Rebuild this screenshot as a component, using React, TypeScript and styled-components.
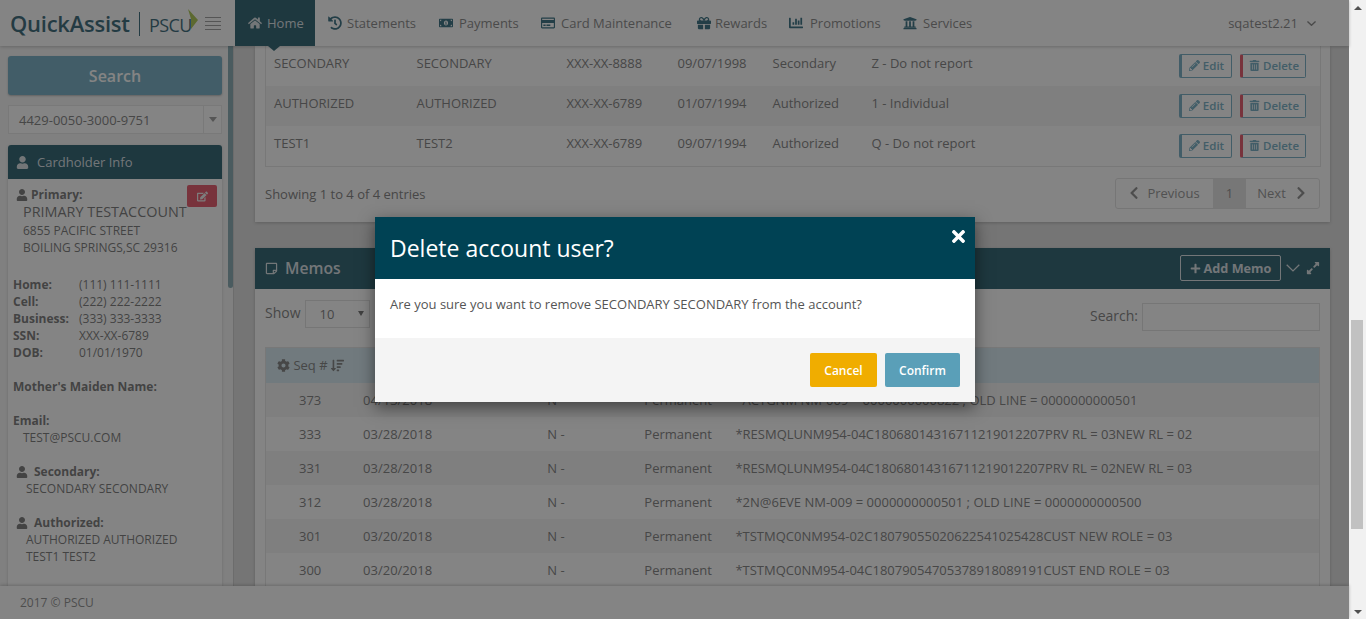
import styled, { createGlobalStyle } from "styled-components";
import {
  FaCalendarAlt,
  FaChartBar,
  FaChevronLeft,
  FaChevronRight,
  FaCog,
  FaEdit,
  FaExpandAlt,
  FaGift,
  FaHistory,
  FaHome,
  FaMoneyBillAlt,
  FaPencilAlt,
  FaPlus,
  FaRegCreditCard,
  FaRegStickyNote,
  FaSortAmountDown,
  FaTimes,
  FaTrashAlt,
  FaUniversity,
  FaUser,
} from "react-icons/fa";

const GlobalStyle = createGlobalStyle`
  html, body {
    margin: 0;
    padding: 0;
    height: 100%;
    overflow: hidden;
  }
  body {
    font-family: "Open Sans", "Liberation Sans", sans-serif;
    font-size: 13px;
    color: #666;
  }
  * {
    box-sizing: border-box;
  }
`;

const Shell = styled.div`
  display: flex;
  width: 1366px;
  height: 619px;
  overflow: hidden;
`;

const Page = styled.div`
  position: relative;
  flex: 1;
  min-width: 0;
  display: flex;
  flex-direction: column;
  background: #d9d9d9;
`;

const WindowScrollbar = styled.div`
  width: 17px;
  background: #f1f1f1;
  display: flex;
  flex-direction: column;
  align-items: center;
  justify-content: space-between;
  padding: 6px 0 5px;
  position: relative;
`;

const ScrollArrow = styled.span<{ $up?: boolean }>`
  width: 0;
  height: 0;
  border-left: 4px solid transparent;
  border-right: 4px solid transparent;
  ${(p) => (p.$up ? "border-bottom: 4px solid #505050;" : "border-top: 4px solid #505050;")}
`;

const ScrollThumb = styled.span`
  position: absolute;
  left: 2px;
  top: 320px;
  width: 12px;
  height: 209px;
  background: #c1c1c1;
`;

const Header = styled.header`
  position: relative;
  z-index: 2;
  height: 46px;
  flex: none;
  display: flex;
  background: #fff;
  box-shadow: 0 1px 3px rgba(0, 0, 0, 0.25);
`;

const Brand = styled.div`
  width: 235px;
  flex: none;
  display: flex;
  align-items: center;
  padding-left: 10px;
  color: #0d4a5c;
`;

const BrandName = styled.span`
  width: 120px;
  font-size: 22px;
  font-weight: 600;
  letter-spacing: -0.25px;
  white-space: nowrap;
`;

const BrandRule = styled.span`
  width: 1px;
  height: 24px;
  background: #0d4a5c;
  margin: 2px 9px 0 9px;
`;

const BrandPscu = styled.span`
  font-size: 18px;
  letter-spacing: -0.6px;
  margin-top: 3px;
`;

const BrandMark = styled.svg`
  width: 10px;
  height: 21px;
  margin: -7px 0 0 -4px;
`;

const Burger = styled.span`
  width: 16px;
  height: 13px;
  margin: 1px 0 0 7px;
  border-top: 1px solid #8a8a8a;
  border-bottom: 1px solid #8a8a8a;
  position: relative;
  &::before,
  &::after {
    content: "";
    position: absolute;
    left: 0;
    right: 0;
    height: 1px;
    background: #8a8a8a;
  }
  &::before {
    top: 3px;
  }
  &::after {
    top: 7px;
  }
`;

const Nav = styled.nav`
  display: flex;
  flex: 1;
`;

const NavItem = styled.a<{ $active?: boolean; $width: number; $gap: number }>`
  position: relative;
  width: ${(p) => p.$width}px;
  flex: none;
  display: flex;
  align-items: center;
  gap: ${(p) => p.$gap}px;
  padding-left: 13px;
  font-size: 13px;
  color: ${(p) => (p.$active ? "#d5dde0" : "#6f6f6f")};
  background: ${(p) => (p.$active ? "#004254" : "transparent")};
  svg {
    flex: none;
    font-size: 14px;
    color: ${(p) => (p.$active ? "#d5dde0" : "#0d5268")};
  }
  ${(p) =>
    p.$active &&
    `&::after {
      content: "";
      position: absolute;
      left: 33px;
      bottom: -5px;
      border-left: 6px solid transparent;
      border-right: 6px solid transparent;
      border-top: 5px solid #004254;
    }`}
`;

const UserMenu = styled.div`
  display: flex;
  align-items: center;
  gap: 9px;
  padding-right: 33px;
  font-size: 13px;
  color: #6f6f6f;
`;

const ThinChevron = styled.svg<{ $size: number }>`
  width: ${(p) => p.$size}px;
  height: ${(p) => Math.round(p.$size * 0.6)}px;
  fill: none;
  stroke: currentColor;
  stroke-width: 1.3;
  flex: none;
`;

const Body = styled.div`
  flex: 1;
  min-height: 0;
  display: flex;
  overflow: hidden;
`;

const Sidebar = styled.aside`
  width: 234px;
  flex: none;
  position: relative;
  background: #f4f4f4;
  border-right: 1px solid #c4c4c4;
  padding: 10px 7px 0 8px;
`;

const SidebarThumb = styled.span`
  position: absolute;
  right: 0;
  top: 0;
  width: 5px;
  height: 242px;
  border-radius: 0 0 3px 3px;
  background: #6f9aa3;
`;

const SearchButton = styled.button`
  display: block;
  width: 214px;
  height: 39px;
  border: 0;
  border-radius: 3px;
  background: #5a9fb8;
  box-shadow: 0 1px 2px rgba(0, 0, 0, 0.3);
  color: #fff;
  font: 600 16px "Open Sans", sans-serif;
`;

const AccountSelect = styled.div`
  width: 214px;
  height: 29px;
  margin-top: 10px;
  display: flex;
  align-items: center;
  background: #fff;
  border: 1px solid #e3e3e3;
  padding-left: 10px;
  font-size: 13px;
`;

const AccountNumber = styled.span`
  flex: 1;
`;

const SelectCaret = styled.span`
  width: 18px;
  height: 100%;
  border-left: 1px solid #e3e3e3;
  display: flex;
  align-items: center;
  justify-content: center;
  &::after {
    content: "";
    border-left: 4px solid transparent;
    border-right: 4px solid transparent;
    border-top: 5px solid #8a8a8a;
  }
`;

const Card = styled.section`
  width: 214px;
  margin-top: 11px;
  background: #fff;
  box-shadow: 0 1px 3px rgba(0, 0, 0, 0.2);
  border-radius: 3px 3px 0 0;
  height: 470px;
`;

const CardHeader = styled.div`
  height: 34px;
  display: flex;
  align-items: center;
  gap: 8px;
  padding-left: 8px;
  background: #004254;
  border-radius: 3px 3px 0 0;
  color: #d5dde0;
  font-size: 13px;
  svg {
    font-size: 13px;
  }
`;

const CardBody = styled.div`
  position: relative;
  padding: 7px 5px;
  font-size: 12px;
  line-height: 17px;
  color: #5d5d5d;
`;

const EditHolder = styled.button`
  position: absolute;
  top: 6px;
  right: 5px;
  width: 30px;
  height: 22px;
  border: 0;
  border-radius: 2px;
  background: #e2354b;
  color: #eee;
  display: flex;
  align-items: center;
  justify-content: center;
  font-size: 11px;
`;

const Role = styled.div<{ $top?: number; $gap: number }>`
  display: flex;
  align-items: center;
  gap: ${(p) => p.$gap}px;
  padding-left: 3px;
  font-weight: 700;
  margin-top: ${(p) => p.$top ?? 0}px;
  svg {
    font-size: 12px;
  }
`;

const HolderName = styled.div`
  padding: 0 0 2px 10px;
  font-size: 14.4px;
  line-height: 17px;
  white-space: nowrap;
`;

const Indented = styled.div<{ $left?: number }>`
  padding-left: ${(p) => p.$left ?? 10}px;
`;

const Contact = styled.div`
  display: grid;
  grid-template-columns: 66px 1fr;
  margin-top: 20px;
`;

const Label = styled.div<{ $top?: number }>`
  font-weight: 700;
  margin-top: ${(p) => p.$top ?? 0}px;
`;

const Main = styled.main`
  flex: 1;
  min-width: 0;
  padding: 0 19px 0 21px;
  display: flex;
  flex-direction: column;
  gap: 26px;
  overflow: hidden;
`;

const Panel = styled.section`
  flex: none;
  background: #fff;
  box-shadow: 0 1px 3px rgba(0, 0, 0, 0.25);
`;

const UsersBody = styled.div`
  padding: 0 10px 13px;
`;

const Table = styled.table`
  width: 100%;
  border-collapse: collapse;
  table-layout: fixed;
  font-size: 13px;
`;

const UsersTable = styled(Table)`
  border: 1px solid #e2e2e2;
  border-top: 0;
`;

const MemoTable = styled(Table)`
  outline: 1px solid #e2e2e2;
  outline-offset: -1px;
`;

const UserRow = styled.tr<{ $shaded: boolean }>`
  background: ${(p) => (p.$shaded ? "#f3f3f3" : "#fff")};
  height: 40px;
`;

const Cell = styled.td`
  padding: 0 0 6px 8px;
  vertical-align: middle;
  white-space: nowrap;
`;

const ActionCell = styled(Cell)`
  padding: 0 14px 0 0;
`;

const Actions = styled.div`
  display: flex;
  justify-content: flex-end;
  gap: 8px;
`;

const OutlineButton = styled.button<{ $accent: string; $width: number }>`
  width: ${(p) => p.$width}px;
  height: 24px;
  padding: 0 0 1px;
  display: flex;
  align-items: center;
  justify-content: center;
  gap: 3px;
  background: #fff;
  border: 1px solid #5a9fb8;
  border-left: 3px solid ${(p) => p.$accent};
  border-radius: 2px;
  color: #5a9fb8;
  font: 600 11.5px "Open Sans", sans-serif;
  svg {
    font-size: 11px;
  }
`;

const TableFooter = styled.div`
  display: flex;
  align-items: center;
  justify-content: space-between;
  margin-top: 11px;
`;

const EntriesInfo = styled.span`
  padding-top: 2px;
`;

const Pagination = styled.div`
  display: flex;
  height: 31px;
  border: 1px solid #dcdcdc;
  border-radius: 3px;
  font-size: 13px;
`;

const PageLink = styled.span<{ $current?: boolean; $width: number; $gap?: number; $trail?: number }>`
  width: ${(p) => p.$width}px;
  display: flex;
  align-items: center;
  justify-content: center;
  gap: ${(p) => p.$gap ?? 8}px;
  padding-right: ${(p) => p.$trail ?? 0}px;
  color: ${(p) => (p.$current ? "#777" : "#808080")};
  background: ${(p) => (p.$current ? "#dedede" : "transparent")};
  svg {
    font-size: 14px;
    color: #777;
  }
`;

const MemoHeader = styled.div`
  height: 41px;
  display: flex;
  align-items: center;
  background: #004254;
  color: #d5dde0;
  padding: 0 10px;
`;

const MemoTitle = styled.div`
  flex: 1;
  display: flex;
  align-items: center;
  gap: 7px;
  font-size: 15.7px;
  font-weight: 600;
  svg {
    font-size: 13px;
  }
`;

const AddMemo = styled.button`
  height: 26px;
  width: 101px;
  display: flex;
  align-items: center;
  justify-content: center;
  gap: 3px;
  background: transparent;
  border: 1px solid #d5dde0;
  border-radius: 2px;
  color: #d5dde0;
  font: 700 12.7px "Open Sans", sans-serif;
  white-space: nowrap;
  padding: 0;
  svg {
    font-size: 11px;
  }
`;

const HeaderTool = styled.span<{ $left: number }>`
  display: flex;
  align-items: center;
  margin-left: ${(p) => p.$left}px;
  color: #d5dde0;
  font-size: 14px;
`;

const MemoBody = styled.div`
  padding: 11px 10px 0;
`;

const MemoControls = styled.div`
  display: flex;
  align-items: flex-start;
  justify-content: space-between;
  height: 31px;
  margin-bottom: 16px;
  font-size: 14px;
`;

const ShowGroup = styled.div`
  display: flex;
  align-items: center;
  gap: 4px;
`;

const ControlLabel = styled.span`
  padding-bottom: 2px;
`;

const PageSize = styled.div`
  width: 65px;
  height: 28px;
  border: 1px solid #dcdcdc;
  display: flex;
  align-items: center;
  justify-content: space-between;
  padding: 0 5px 0 14px;
  font-size: 13px;
  &::after {
    content: "";
    border-left: 3px solid transparent;
    border-right: 3px solid transparent;
    border-top: 5px solid #555;
  }
`;

const SearchGroup = styled.div`
  display: flex;
  align-items: center;
  gap: 4px;
  margin-top: 3px;
`;

const SearchField = styled.div`
  width: 178px;
  height: 28px;
  border: 1px solid #dcdcdc;
`;

const HeadRow = styled.tr`
  height: 36px;
  background: #cfe6ef;
`;

const HeadCell = styled.th`
  padding: 0 0 0 12px;
  text-align: left;
  font-weight: 400;
  color: #666;
  svg {
    font-size: 13px;
    vertical-align: -2px;
  }
`;

const MemoRow = styled.tr<{ $shaded: boolean }>`
  height: 34px;
  background: ${(p) => (p.$shaded ? "#f3f3f3" : "#fff")};
`;

const SeqCell = styled.td`
  padding-left: 34px;
`;

const MemoCell = styled.td`
  padding: 0;
  white-space: nowrap;
`;

const Footer = styled.footer`
  position: relative;
  z-index: 2;
  height: 33px;
  flex: none;
  display: flex;
  align-items: center;
  padding-left: 20px;
  background: #fff;
  box-shadow: 0 -1px 3px rgba(0, 0, 0, 0.25);
  font-size: 12px;
  color: #777;
`;

const Backdrop = styled.div`
  position: absolute;
  inset: 0;
  z-index: 5;
  background: rgba(50, 50, 50, 0.6);
`;

const Modal = styled.div`
  position: absolute;
  z-index: 6;
  left: 375px;
  top: 217px;
  width: 600px;
  height: 185px;
  display: flex;
  flex-direction: column;
  background: #fff;
  box-shadow: 0 5px 15px rgba(0, 0, 0, 0.5);
`;

const ModalHeader = styled.div`
  position: relative;
  height: 62px;
  flex: none;
  display: flex;
  align-items: center;
  padding-left: 15px;
  background: #004254;
  color: #fff;
  font-size: 23px;
`;

const CloseButton = styled.span`
  position: absolute;
  right: 7px;
  top: 10px;
  display: flex;
  color: #fff;
  font-size: 19px;
`;

const ModalBody = styled.div`
  height: 59px;
  flex: none;
  padding: 17px 15px 0;
  font-size: 13px;
  line-height: 17px;
  color: #555;
`;

const ModalFooter = styled.div`
  flex: 1;
  display: flex;
  align-items: center;
  justify-content: flex-end;
  gap: 8px;
  padding-right: 15px;
  background: #f4f4f4;
`;

const ModalButton = styled.button<{ $color: string; $width: number }>`
  width: ${(p) => p.$width}px;
  height: 34px;
  border: 0;
  border-radius: 2px;
  background: ${(p) => p.$color};
  color: #fff;
  font: 600 12px "Open Sans", sans-serif;
`;

const navItems = [
  { label: "Statements", icon: <FaHistory />, width: 111, gap: 5 },
  { label: "Payments", icon: <FaMoneyBillAlt />, width: 102, gap: 6 },
  { label: "Card Maintenance", icon: <FaRegCreditCard />, width: 156, gap: 6 },
  { label: "Rewards", icon: <FaGift />, width: 92, gap: 4 },
  { label: "Promotions", icon: <FaChartBar />, width: 114, gap: 7 },
  { label: "Services", icon: <FaUniversity />, width: 100, gap: 6 },
];

const users = [
  ["SECONDARY", "SECONDARY", "XXX-XX-8888", "09/07/1998", "Secondary", "Z - Do not report"],
  ["AUTHORIZED", "AUTHORIZED", "XXX-XX-6789", "01/07/1994", "Authorized", "1 - Individual"],
  ["TEST1", "TEST2", "XXX-XX-6789", "09/07/1994", "Authorized", "Q - Do not report"],
];

const memos = [
  ["373", "04/13/2018", "N -", "Permanent", "*ACTGNM NM-009 = 0000000000822 ; OLD LINE = 0000000000501"],
  ["333", "03/28/2018", "N -", "Permanent", "*RESMQLUNM954-04C18068014316711219012207PRV RL = 03NEW RL = 02"],
  ["331", "03/28/2018", "N -", "Permanent", "*RESMQLUNM954-04C18068014316711219012207PRV RL = 02NEW RL = 03"],
  ["312", "03/28/2018", "N -", "Permanent", "*2N@6EVE NM-009 = 0000000000501 ; OLD LINE = 0000000000500"],
  ["301", "03/20/2018", "N -", "Permanent", "*TSTMQC0NM954-02C18079055020622541025428CUST NEW ROLE = 03"],
  ["300", "03/20/2018", "N -", "Permanent", "*TSTMQC0NM954-04C18079054705378918089191CUST END ROLE = 03"],
];

const contacts = [
  ["Home:", "(111) 111-1111"],
  ["Cell:", "(222) 222-2222"],
  ["Business:", "(333) 333-3333"],
  ["SSN:", "XXX-XX-6789"],
  ["DOB:", "01/01/1970"],
];

const userWidths = [143, 150, 111, 95, 99, 300, 157];
const memoWidths = [98, 184, 97, 91, 584];

function Chevron({ size }: { size: number }) {
  return (
    <ThinChevron $size={size} viewBox="0 0 10 6" preserveAspectRatio="none">
      <path d="M0.5 0.5L5 5.2L9.5 0.5" vectorEffect="non-scaling-stroke" />
    </ThinChevron>
  );
}

export default function App() {
  return (
    <Shell>
      <GlobalStyle />
      <Page>
        <Header>
          <Brand>
            <BrandName>QuickAssist</BrandName>
            <BrandRule />
            <BrandPscu>PSCU</BrandPscu>
            <BrandMark viewBox="0 0 10 21">
              <path d="M0 0L10 11L3 20L3 10z" fill="#9bbb2f" />
            </BrandMark>
            <Burger />
          </Brand>
          <Nav>
            <NavItem $active $width={80} $gap={5}>
              <FaHome />
              Home
            </NavItem>
            {navItems.map((item) => (
              <NavItem key={item.label} $width={item.width} $gap={item.gap}>
                {item.icon}
                {item.label}
              </NavItem>
            ))}
          </Nav>
          <UserMenu>
            sqatest2.21
            <Chevron size={9} />
          </UserMenu>
        </Header>

        <Body>
          <Sidebar>
            <SidebarThumb />
            <SearchButton>Search</SearchButton>
            <AccountSelect>
              <AccountNumber>4429-0050-3000-9751</AccountNumber>
              <SelectCaret />
            </AccountSelect>
            <Card>
              <CardHeader>
                <FaUser />
                Cardholder Info
              </CardHeader>
              <CardBody>
                <EditHolder>
                  <FaEdit />
                </EditHolder>
                <Role $gap={3}>
                  <FaUser />
                  Primary:
                </Role>
                <HolderName>PRIMARY TESTACCOUNT</HolderName>
                <Indented>6855 PACIFIC STREET</Indented>
                <Indented>BOILING SPRINGS,SC 29316</Indented>
                <Contact>
                  {contacts.map(([label, value]) => (
                    <>
                      <Label key={label}>{label}</Label>
                      <div key={value}>{value}</div>
                    </>
                  ))}
                </Contact>
                <Label $top={17}>Mother's Maiden Name:</Label>
                <Label $top={17}>Email:</Label>
                <Indented>TEST@PSCU.COM</Indented>
                <Role $top={17} $gap={6}>
                  <FaUser />
                  Secondary:
                </Role>
                <Indented $left={13}>SECONDARY SECONDARY</Indented>
                <Role $top={17} $gap={6}>
                  <FaUser />
                  Authorized:
                </Role>
                <Indented $left={13}>AUTHORIZED AUTHORIZED</Indented>
                <Indented $left={13}>TEST1 TEST2</Indented>
              </CardBody>
            </Card>
          </Sidebar>

          <Main>
            <Panel>
              <UsersBody>
                <UsersTable>
                  <colgroup>
                    {userWidths.map((w, i) => (
                      <col key={i} width={w} />
                    ))}
                  </colgroup>
                  <tbody>
                    {users.map((row, i) => (
                      <UserRow key={i} $shaded={i % 2 === 1}>
                        {row.map((value, j) => (
                          <Cell key={j}>{value}</Cell>
                        ))}
                        <ActionCell>
                          <Actions>
                            <OutlineButton $accent="#5a9fb8" $width={53}>
                              <FaPencilAlt />
                              Edit
                            </OutlineButton>
                            <OutlineButton $accent="#e2354b" $width={66}>
                              <FaTrashAlt />
                              Delete
                            </OutlineButton>
                          </Actions>
                        </ActionCell>
                      </UserRow>
                    ))}
                  </tbody>
                </UsersTable>
                <TableFooter>
                  <EntriesInfo>Showing 1 to 4 of 4 entries</EntriesInfo>
                  <Pagination>
                    <PageLink $width={97} $gap={6} $trail={2}>
                      <FaChevronLeft />
                      Previous
                    </PageLink>
                    <PageLink $current $width={33}>
                      1
                    </PageLink>
                    <PageLink $width={73}>
                      Next
                      <FaChevronRight />
                    </PageLink>
                  </Pagination>
                </TableFooter>
              </UsersBody>
            </Panel>

            <Panel>
              <MemoHeader>
                <MemoTitle>
                  <FaRegStickyNote />
                  Memos
                </MemoTitle>
                <AddMemo>
                  <FaPlus />
                  Add Memo
                </AddMemo>
                <HeaderTool $left={5}>
                  <Chevron size={14} />
                </HeaderTool>
                <HeaderTool $left={6}>
                  <FaExpandAlt />
                </HeaderTool>
              </MemoHeader>
              <MemoBody>
                <MemoControls>
                  <ShowGroup>
                    <ControlLabel>Show</ControlLabel>
                    <PageSize>10</PageSize>
                  </ShowGroup>
                  <SearchGroup>
                    <ControlLabel>Search:</ControlLabel>
                    <SearchField />
                  </SearchGroup>
                </MemoControls>
                <MemoTable>
                  <colgroup>
                    {memoWidths.map((w, i) => (
                      <col key={i} width={w} />
                    ))}
                  </colgroup>
                  <thead>
                    <HeadRow>
                      <HeadCell>
                        <FaCog /> Seq # <FaSortAmountDown />
                      </HeadCell>
                      <HeadCell>
                        <FaCalendarAlt />
                      </HeadCell>
                      <HeadCell />
                      <HeadCell />
                      <HeadCell />
                    </HeadRow>
                  </thead>
                  <tbody>
                    {memos.map((row, i) => (
                      <MemoRow key={row[0]} $shaded={i % 2 === 0}>
                        <SeqCell>{row[0]}</SeqCell>
                        {row.slice(1).map((value, j) => (
                          <MemoCell key={j}>{value}</MemoCell>
                        ))}
                      </MemoRow>
                    ))}
                  </tbody>
                </MemoTable>
              </MemoBody>
            </Panel>
          </Main>
        </Body>

        <Footer>2017 © PSCU</Footer>

        <Backdrop />
        <Modal>
          <ModalHeader>
            Delete account user?
            <CloseButton>
              <FaTimes />
            </CloseButton>
          </ModalHeader>
          <ModalBody>Are you sure you want to remove SECONDARY SECONDARY from the account?</ModalBody>
          <ModalFooter>
            <ModalButton $color="#f0ad00" $width={67}>
              Cancel
            </ModalButton>
            <ModalButton $color="#5a9fb8" $width={75}>
              Confirm
            </ModalButton>
          </ModalFooter>
        </Modal>
      </Page>
      <WindowScrollbar>
        <ScrollArrow $up />
        <ScrollThumb />
        <ScrollArrow />
      </WindowScrollbar>
    </Shell>
  );
}
